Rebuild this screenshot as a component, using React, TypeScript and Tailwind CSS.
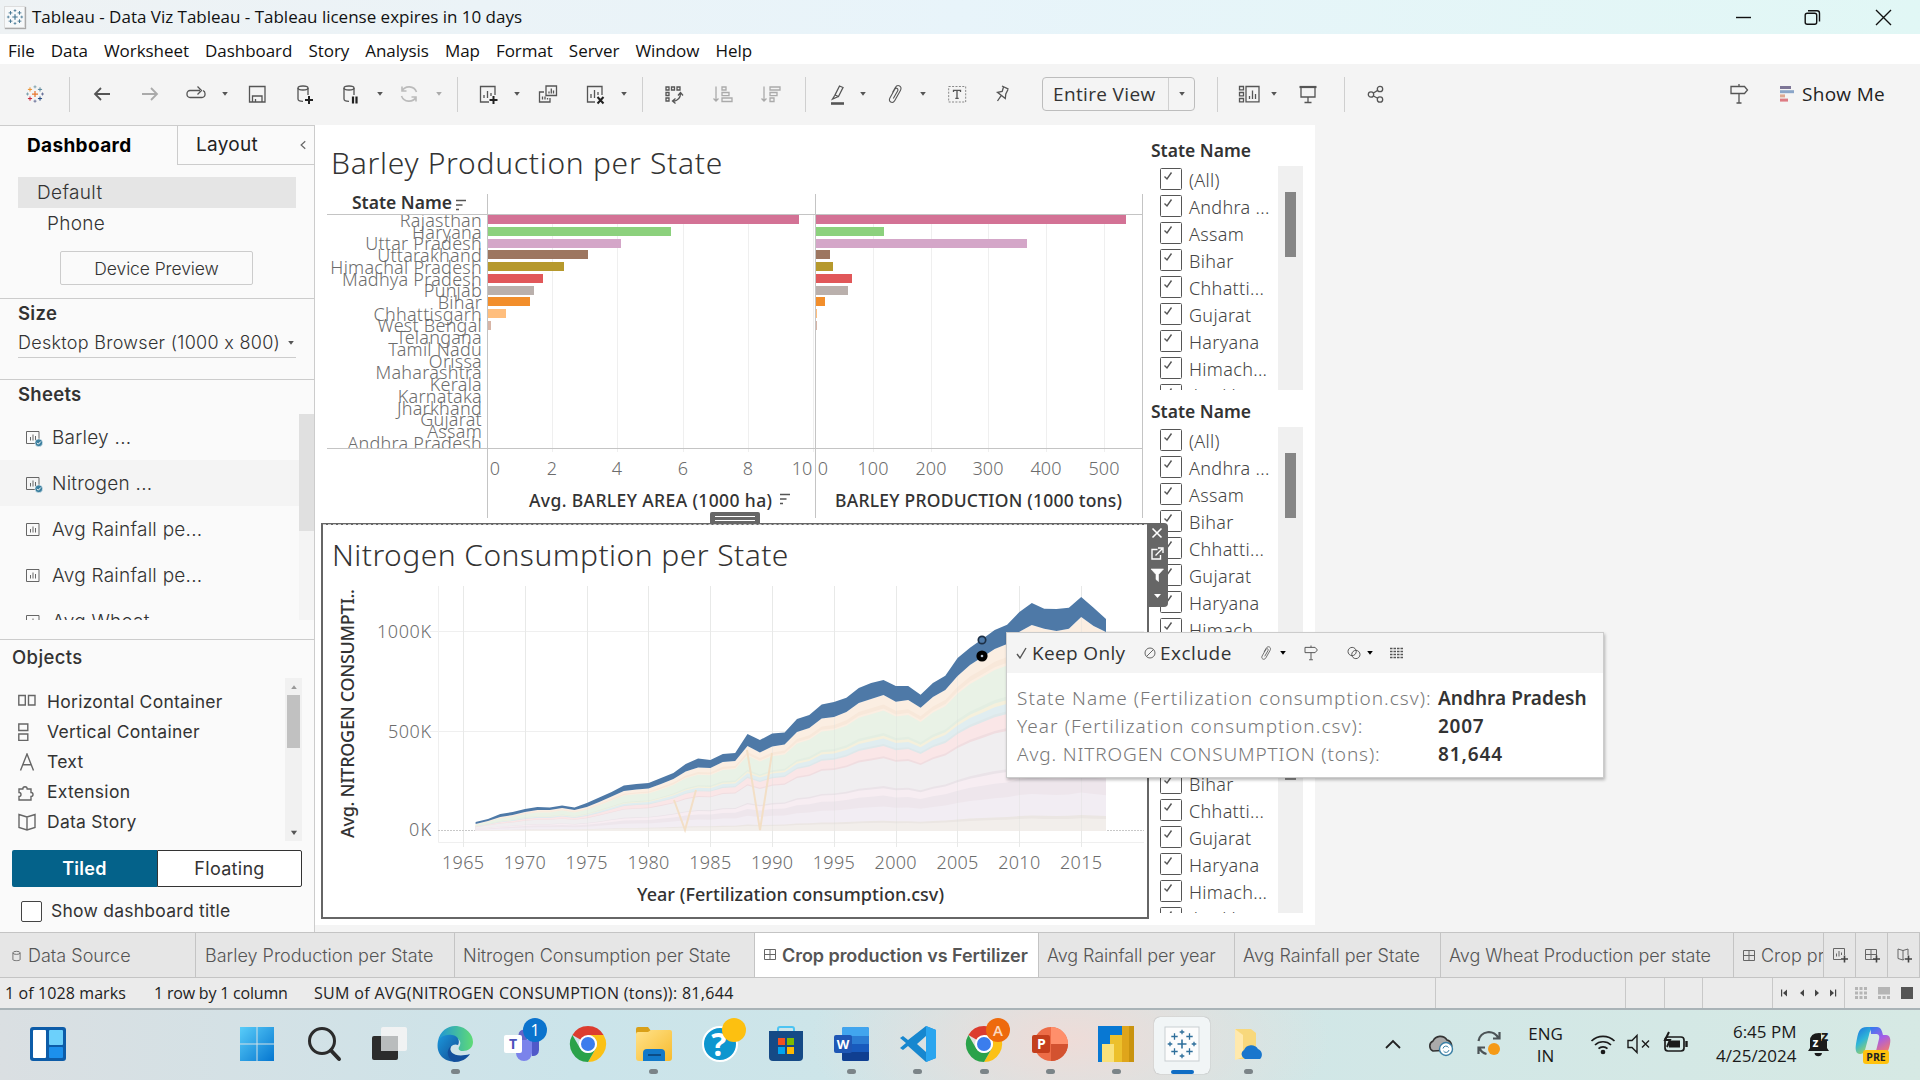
import React from "react";

type Kids = { children?: React.ReactNode };

/* ---------- icon helpers ---------- */

function Ico({ children, className = "" }: Kids & { className?: string }) {
  return (
    <svg viewBox="0 0 24 24" fill="none" stroke="currentColor" strokeWidth="1.3" className={"h-6 w-6 shrink-0 text-[#555] " + className}>
      {children}
    </svg>
  );
}

function Caret({ className = "" }: { className?: string }) {
  return (
    <svg viewBox="0 0 8 6" className={"h-1.5 w-2 shrink-0 fill-[#555] " + className}>
      <path d="M1.2 1h5.6L4 4.8z" />
    </svg>
  );
}

function Sep({ className = "" }: { className?: string }) {
  return <div className={"h-[35px] w-px shrink-0 bg-[#cfcfcf] " + className} />;
}

const plus = (x: number, y: number, r: number) => `M${x - r} ${y}h${2 * r}M${x} ${y - r}v${2 * r}`;

function TableauMark({ mono = false, className = "" }: { mono?: boolean; className?: string }) {
  const c = (v: string) => (mono ? "#3f7390" : v);
  return (
    <svg viewBox="0 0 24 24" fill="none" className={"shrink-0 " + className}>
      <path d={plus(12, 12, 3.6)} stroke={c("#e8762d")} strokeWidth="1.5" />
      <path d={plus(6, 6.5, 2.5)} stroke={c("#eb912c")} strokeWidth="1.2" />
      <path d={plus(18, 6.5, 2.5)} stroke={c("#59879b")} strokeWidth="1.2" />
      <path d={plus(6, 17.5, 2.5)} stroke={c("#c72035")} strokeWidth="1.2" />
      <path d={plus(18, 17.5, 2.5)} stroke={c("#1f457e")} strokeWidth="1.2" />
      <path d={plus(12, 3.4, 1.8)} stroke={c("#7199a6")} strokeWidth="1" />
      <path d={plus(12, 20.6, 1.8)} stroke={c("#5b6591")} strokeWidth="1" />
      <path d={plus(3, 12, 1.8)} stroke={c("#7199a6")} strokeWidth="1" />
      <path d={plus(21, 12, 1.8)} stroke={c("#5b6591")} strokeWidth="1" />
    </svg>
  );
}

function Clip({ className = "" }: { className?: string }) {
  return (
    <Ico className={className}>
      <path d="M9.500 10.500l2.700-4.800c2.400-4.200 7.600-1.400 5.200 2.900l-5.600 9.900c-2.200 3.800-7 1.200-4.900-2.600l4.900-8.600c1.300-2.200 4.100-.7 2.800 1.600l-4.300 7.500" strokeWidth="1.100" />
    </Ico>
  );
}

function Signpost({ className = "" }: { className?: string }) {
  return (
    <Ico className={className}>
      <path d="M12 2v2.500M4 4.500h13.500l3 3.500-3 3.500H4zM12 11.500v9M9.500 21h5" />
    </Ico>
  );
}

/* ---------- title bar and menu ---------- */

function TitleBar() {
  return (
    <header className="flex h-[34px] shrink-0 items-center bg-linear-to-r from-[#eef2f4] via-[#e8f4fa] via-50% to-[#e1f7f5] pl-1 font-['Open_Sans',sans-serif]">
      <div className="flex h-[22px] w-[21px] items-center justify-center border border-[#ddd] bg-[#f7f9fa] shadow-[1px_1px_1px_#aaa]">
        <TableauMark mono className="h-[18px] w-[18px]" />
      </div>
      <span className="ml-[7px] text-[17px] tracking-[-0.01px] text-[#111]">Tableau - Data Viz Tableau - Tableau license expires in 10 days</span>
      <svg viewBox="0 0 160 20" fill="none" stroke="#111" strokeWidth="1.4" className="mr-[28px] ml-auto h-5 w-40">
        <path d="M4 10.500h15" />
        <rect x="73.200" y="6.200" width="11.500" height="11" rx="2" />
        <path d="M76 3.700h9a2.500 2.500 0 0 1 2.500 2.500v8.300" />
        <path d="M144 3l15 15M159 3l-15 15" />
      </svg>
    </header>
  );
}

const menus = ["File", "Data", "Worksheet", "Dashboard", "Story", "Analysis", "Map", "Format", "Server", "Window", "Help"];

function MenuBar() {
  return (
    <nav className="flex h-[30px] shrink-0 items-center gap-4 bg-white pt-[3px] pl-2 font-['Open_Sans',sans-serif] text-[17px] tracking-[-0.04px] text-[#111]">
      {menus.map((m) => (
        <span key={m}>{m}</span>
      ))}
    </nav>
  );
}

/* ---------- toolbar ---------- */

function Toolbar() {
  return (
    <div className="flex h-[61px] shrink-0 items-center bg-[#f4f4f4] pb-px">
      <TableauMark className="ml-[25px] h-5 w-5" />
      <Sep className="ml-[24px]" />
      <Ico className="ml-[20px]"><path d="M20 12H5M11 6l-6 6 6 6" strokeWidth="1.8" /></Ico>
      <Ico className="ml-6 text-[#aaa]"><path d="M4 12h15M13 6l6 6-6 6" strokeWidth="1.8" /></Ico>
      <Ico className="ml-[22px]"><path d="M7 15.500H6a3 3 0 0 1-3-3v-1a3 3 0 0 1 3-3h10M13.500 4.500l4 4-4 4M17 15.500h1a3 3 0 0 0 3-3v-1a3 3 0 0 0-2-2.800M7 15.500h10" /></Ico>
      <Caret className="ml-[13px]" />
      <Ico className="ml-4"><path d="M4.500 4.500h15.500v15.500H4.500zM7.500 20v-6h9.500v6M10.500 20v-3" /></Ico>
      <Ico className="ml-6"><ellipse cx="10" cy="6" rx="5" ry="2" /><path d="M5 6v11c0 1.500 2 2.300 5 2.300M15 6v7" /><path d="M16 14v8M12 18h8" stroke="#222" strokeWidth="2" /></Ico>
      <Ico className="ml-[22px]"><ellipse cx="10" cy="6" rx="5" ry="2" /><path d="M5 6v11c0 1.500 2 2.300 5 2.300M15 6v7" /><path d="M14 14.500v7M17.500 14.500v7" stroke="#222" strokeWidth="2.200" /></Ico>
      <Caret className="ml-[13px]" />
      <Ico className="ml-[13px] text-[#bbb]"><path d="M19.500 10A8 8 0 0 0 5 9M4.500 14A8 8 0 0 0 19 15M5 4.500V9h4.500M19 19.500V15h-4.500" strokeWidth="1.600" /></Ico>
      <Caret className="ml-[14px] fill-[#aaa]" />
      <Sep className="ml-[14px]" />
      <Ico className="ml-[18px]"><path d="M13 20H4.500V4.500H19V13M8 16v-3M11.500 16V9M15 14v-3" /><path d="M17.500 14v8M13.500 18h8" stroke="#222" strokeWidth="2" /></Ico>
      <Caret className="ml-[13px]" />
      <Ico className="ml-[15px]"><path d="M10 4h10.500v9.500H10zM13 11.500V9.500M15.300 11.500V6.500M17.500 11.500V8.500M8 10H3.500v10H14v-4M6.500 17.500v-3M9 17.500v-3M11.500 17.500v-1.500" /></Ico>
      <Ico className="ml-[23px]"><path d="M12 20H4.500V4.500H19V13M8 16v-4M11.500 16V8M15 13v-3" /><path d="M14.500 15l6 6.500M20.500 15l-6 6.500" stroke="#222" strokeWidth="2" /></Ico>
      <Caret className="ml-[13px]" />
      <Sep className="ml-[14px]" />
      <Ico className="ml-[19px]"><path d="M4 5h3v3H4zM9.500 5h3v3h-3zM15 5h3v3h-3zM4 10.500h3v3H4zM4 16h3v3H4zM18.500 11.500c0 4-2 7-7.500 8M16 13.500l2.500-3 2.500 3M13.500 16.500l-3 2.500 3 2.500" /></Ico>
      <Ico className="ml-[25px] text-[#aaa]"><path d="M5 4.500V19M2.500 16.500L5 19l2.500-2.500M11 5h4v3h-4zM11 10.500h7v3.200h-7zM11 16h10v3.500H11z" /></Ico>
      <Ico className="ml-6 text-[#aaa]"><path d="M5 4.500V19M2.500 16.500L5 19l2.500-2.500M11 5h10v3H11zM11 10.500h7v3.200h-7zM11 16h4v3.500h-4z" /></Ico>
      <Sep className="ml-[22px]" />
      <Ico className="ml-[20px]"><path d="M13.500 4l3.500 1.500-4.500 9-3.500-1.500zM9 13l-2.500 4 6-2.500" /><path d="M5 21.500h13" strokeWidth="2.600" /></Ico>
      <Caret className="ml-[9px]" />
      <Clip className="ml-4" />
      <Caret className="ml-3" />
      <Ico className="ml-[18px]"><path d="M3.700 4.500h17v15.500h-17z" strokeDasharray="2 1.400" stroke="#888" strokeWidth="1" /><path d="M8.500 10V8.300h7V10M12 8.300v8M10.300 16.300h3.400" /></Ico>
      <Ico className="ml-[22px]"><path d="M11 4l6.500 3.200M12.500 5l-1.300 4.500-4.700.8 7.800 6.200.5-4.500 2.200-4.500M10.300 13.300L6.500 19" /></Ico>
      <div className="ml-[27px] flex h-[34px] w-[153px] shrink-0 items-center rounded-sm border border-[#bdbdbd] font-['Open_Sans',sans-serif] text-[19px] text-[#333]">
        <span className="flex-1 pl-2.5 tracking-[0.35px]">Entire View</span>
        <span className="flex h-full w-[26px] items-center justify-center border-l border-[#d0d0d0]"><Caret /></span>
      </div>
      <Sep className="ml-[22px]" />
      <Ico className="ml-[19px]"><path d="M2.500 4.500h4v3.300h-4zM2.500 10.500h4v3.300h-4zM2.500 16.500h4v3.300h-4zM9 4.500h13v15.300H9zM12.500 17v-3M15.500 17V8.500M18.500 17v-5" /></Ico>
      <Caret className="ml-[9px]" />
      <Ico className="ml-[18px]"><path d="M3.500 5h17" strokeWidth="2.200" /><path d="M5 5v10h14V5M12 15v5.500M8.500 20.500h7" /></Ico>
      <Sep className="ml-6" />
      <Ico className="ml-[19px]"><circle cx="7" cy="12.500" r="2.700" /><circle cx="16" cy="7" r="2.700" /><circle cx="16" cy="17.500" r="2.700" /><path d="M9.400 11l4.300-2.600M9.400 14l4.300 2.300" /></Ico>
      <Signpost className="ml-auto" />
      <svg viewBox="0 0 16 16" className="ml-[29px] h-4 w-4 shrink-0">
        <path fill="#7d7596" d="M0 0h11v3H0z" />
        <path fill="#8aa5c8" d="M0 4.200h14v3H0z" />
        <path fill="#dda891" d="M0 8.400h5v3H0z" />
        <path fill="#dd7b83" d="M0 12.600h8v3H0z" />
      </svg>
      <span className="mr-[35px] ml-[6px] font-['Open_Sans',sans-serif] text-[19px] tracking-[0.3px] text-[#222]">Show Me</span>
    </div>
  );
}

/* ---------- left panel ---------- */

function SheetIcon({ used }: { used?: boolean }) {
  return (
    <svg viewBox="0 0 18 18" fill="none" stroke="#666" className="mt-[2px] h-[18px] w-[18px] shrink-0">
      <path d="M.5 1.500h12.500V13.500H.5zM4.500 10.500V7M7 10.500V4.500M9.500 10.500V6" />
      {used && (
        <>
          <circle cx="12.800" cy="12.800" r="3.900" fill="#3b7f9f" stroke="#fff" strokeWidth=".6" />
          <path d="M11 12.800l1.400 1.400 2.400-2.700" stroke="#fff" />
        </>
      )}
    </svg>
  );
}

const sheets: [string, boolean, boolean][] = [
  ["Barley ...", true, false],
  ["Nitrogen ...", true, true],
  ["Avg Rainfall pe...", false, false],
  ["Avg Rainfall pe...", false, false],
  ["Avg Wheat ...", false, false],
];

const objects: [string, React.ReactNode][] = [
  ["Horizontal Container", <path key="p" d="M.8 2.500h6.500v9.500H.8zM10.500 2.500H17v9.500h-6.500z" />],
  ["Vertical Container", <path key="p" d="M.8 1h9v6.500h-9zM.8 11h9v6.500h-9z" />],
  ["Text", <path key="p" d="M2.500 17.500L9 1l6.500 16.500M4.800 11.700h8.400" />],
  ["Extension", <path key="p" d="M1 6h3.800a2 2 0 1 1 4.400 0H13v3.500a2 2 0 1 1 0 4V17H1v-3.500a2 2 0 1 0 0-4z" />],
  ["Data Story", <path key="p" d="M9 4L1 1.500v13L9 17l8-2.500v-13zM9 4v13" />],
];

function SidePanel() {
  return (
    <aside className="flex w-[315px] shrink-0 flex-col border-r border-[#ccc] bg-[#fafafa] font-['Inter',sans-serif] text-[18px] text-[#333]">
      <div className="flex h-[40px] shrink-0 border-t border-[#ccc]">
        <div className="w-[177px] pt-[6px] pl-[27px] text-[19px] leading-[27px] font-bold tracking-[0.35px] text-black">Dashboard</div>
        <div className="flex flex-1 items-center border-b border-l border-[#ccc] pl-[18px] text-[19px] tracking-[0.3px] text-[#222]">
          Layout
          <svg viewBox="0 0 8 12" fill="none" stroke="#666" strokeWidth="1.600" className="mr-[8px] ml-auto h-2.5 w-1.5"><path d="M7 1L1.500 6 7 11" /></svg>
        </div>
      </div>
      <div className="mx-[18px] mt-3 h-[31px] bg-[#e5e5e5] pl-[19px] text-[19px] leading-[32px] font-light tracking-[0.35px]">Default</div>
      <div className="h-[31px] pl-[47px] text-[19px] leading-[31px] font-light tracking-[0.3px]">Phone</div>
      <div className="mt-3 ml-[60px] h-[34px] w-[193px] rounded-xs border border-[#ccc] text-center text-[17.5px] leading-[33px] font-light tracking-[-0.1px]">Device Preview</div>
      <div className="mt-[13px] h-[81px] border-t border-[#ccc] px-[18px]">
        <div className="h-[29px] text-[18.5px] leading-[28px] font-semibold tracking-[0.3px]">Size</div>
        <div className="flex h-[30px] items-center justify-between border-b border-[#ccc] pr-[1px] text-[18px] font-light tracking-[0.29px]">
          Desktop Browser (1000 x 800) <Caret />
        </div>
      </div>
      <div className="h-[35px] border-t border-[#ccc] pl-[18px] text-[18.5px] leading-[28px] font-semibold tracking-[0.3px]">Sheets</div>
      <div className="flex h-[206px] overflow-hidden">
        <div className="flex-1">
          {sheets.map(([name, used, hot], i) => (
            <div key={i} className={"flex h-[46px] items-center gap-[8px] pt-[2px] pl-[26px] text-[19px] font-light tracking-[0.25px] " + (hot ? "bg-[#f4f4f4]" : "")}>
              <SheetIcon used={used} />
              {name}
            </div>
          ))}
        </div>
        <div className="w-[15px] bg-[#f4f4f4]"><div className="h-[117px] bg-[#e0e0e0]" /></div>
      </div>
      <div className="mt-[19px] h-[39px] border-t border-[#ccc] pl-[12px] text-[18.5px] leading-[34px] font-medium tracking-[0.4px]">Objects</div>
      <div className="flex h-[163px]">
        <div className="flex-1 pt-[9px]">
          {objects.map(([name, d]) => (
            <div key={name} className="flex h-[30px] items-center gap-[11px] pl-[18px] text-[17.5px] tracking-[0.27px]">
              <svg viewBox="0 0 18 18" fill="none" stroke="#666" strokeWidth="1.400" className="h-[18px] w-[18px]">{d}</svg>
              {name}
            </div>
          ))}
        </div>
        <div className="mr-[12px] flex w-[17px] flex-col items-center justify-between bg-[#f1f1f1]">
          <div className="flex flex-col items-center">
            <span className="flex h-[17px] items-center"><Caret className="rotate-180 fill-[#999]" /></span>
            <div className="h-[53px] w-[13px] bg-[#c1c1c1]" />
          </div>
          <span className="flex h-[17px] items-center"><Caret className="scale-110" /></span>
        </div>
      </div>
      <div className="mx-[12px] mt-[9px] flex h-[37px] text-center text-[18px] leading-[35px] tracking-[0.3px]">
        <div className="w-[145px] rounded-l-xs bg-[#04628a] pt-px font-semibold text-white">Tiled</div>
        <div className="flex-1 rounded-r-xs border border-[#333] bg-white">Floating</div>
      </div>
      <div className="mt-[14px] flex items-start pl-[21px]">
        <div className="h-[21px] w-[21px] rounded-xs border border-[#444] bg-white" />
        <span className="ml-[9px] text-[17.5px] leading-[19px] tracking-[0.25px]">Show dashboard title</span>
      </div>
    </aside>
  );
}

/* ---------- barley bar chart ---------- */

const barley: [string, string, number, number, number][] = [
  ["Rajasthan", "#d37295", 215, 799, 1126],
  ["Haryana", "#8cd17d", 227, 671, 884],
  ["Uttar Pradesh", "#d4a6c8", 239, 621, 1027],
  ["Uttarakhand", "#9d7660", 250, 588, 830],
  ["Himachal Pradesh", "#b6992d", 262, 564, 833],
  ["Madhya Pradesh", "#e15759", 274, 543, 852],
  ["Punjab", "#bab0ac", 286, 534, 848],
  ["Bihar", "#f28e2b", 297, 530, 825],
  ["Chhattisgarh", "#ffbe7d", 309, 506, 817],
  ["West Bengal", "#d7b5a6", 321, 491, 817],
];
const emptyStates = ["Telangana", "Tamil Nadu", "Orissa", "Maharashtra", "Kerala", "Karnataka", "Jharkhand", "Gujarat", "Assam", "Andhra Pradesh"];
const stateNames = [...barley.map((b) => b[0]), ...emptyStates];

function SortGlyph({ x, y }: { x: number; y: number }) {
  return <path d={`M${x} ${y}h10M${x} ${y + 4.5}h6.500M${x} ${y + 9}h3`} stroke="#555" strokeWidth="1.500" />;
}

function BarleyChart() {
  const axis: [string, number][] = [["2", 552], ["4", 617], ["6", 683], ["8", 748], ["100", 873], ["200", 931], ["300", 988], ["400", 1046], ["500", 1104]];
  return (
    <svg viewBox="315 190 833 333" className="block h-[333px] w-[833px] font-['Noto_Sans',sans-serif] text-[17.5px]">
      <defs>
        <clipPath id="rows"><rect x="315" y="215" width="833" height="233" /></clipPath>
      </defs>
      <path d="M552.500 215V452M617.500 215V452M683.500 215V452M748.500 215V452M813.500 215V452M873.500 215V452M931.500 215V452M988.500 215V452M1046.500 215V452M1104.500 215V452" stroke="#efefef" />
      {barley.map(([n, c, y, a, b]) => (
        <g key={n} fill={c}>
          <rect x="488" y={y} width={a - 488} height="9" />
          <rect x="816" y={y} width={b - 816} height="9" />
        </g>
      ))}
      <path d="M327 214.500h816M327 448.500h816M487.500 194V518M815.500 194V518M1142.500 194V518" stroke="#c4c4c4" />
      <g clipPath="url(#rows)" textAnchor="end" className="fill-[#6c6c6c] text-[18px] font-light tracking-[0.25px]">
        {stateNames.map((n, i) => (
          <text key={n} x="482" y={227 + i * 11.72}>{n}</text>
        ))}
      </g>
      <text x="352" y="208.500" textLength="100" className="fill-[#333] font-semibold">State Name</text>
      <SortGlyph x={456} y={200.5} />
      <g className="fill-[#6c6c6c] text-[18px] font-light" textAnchor="middle">
        {axis.map(([t, x]) => (
          <text key={t} x={x} y="475">{t}</text>
        ))}
        <text x="495" y="475">0</text>
        <text x="802" y="475">10</text>
        <text x="823" y="475">0</text>
      </g>
      <g className="fill-[#333] font-medium">
        <text x="529" y="507" textLength="243">Avg. BARLEY AREA (1000 ha)</text>
        <text x="835" y="507" textLength="287">BARLEY PRODUCTION (1000 tons)</text>
      </g>
      <SortGlyph x={780} y={494.5} />
    </svg>
  );
}

/* ---------- nitrogen area chart ---------- */

const top = [822, 819, 814, 812, 809, 807, 807.5, 805.5, 807.5, 803, 797.5, 792, 785.5, 784, 783, 778, 773, 764, 758.5, 760, 754, 753, 734, 740, 733.5, 732.5, 719, 715, 704.5, 702, 697.7, 688, 683, 680, 686, 686, 694.7, 683, 675.7, 658, 647.7, 639, 630, 624.7, 612, 603, 608.7, 609, 607.7, 597, 607.7, 619];
const low = [824, 821, 817, 815, 812, 810, 810, 808, 810, 807, 802, 796.5, 791, 789.5, 788.5, 784, 779, 771.5, 767.5, 768, 762, 761, 746, 752.5, 746.5, 744.5, 732, 728, 718.5, 717, 712, 703, 699, 695, 701.7, 700, 707.7, 697, 690, 676, 665, 657, 649, 644, 631.7, 625, 628.7, 631, 628.7, 617, 626, 632];
const yearX = (i: number) => 475.6 + i * 12.36;
const points = (ys: number[]) => ys.map((y, i) => `${yearX(i).toFixed(1)} ${y.toFixed(1)}`);
const under = (f: number) => low.map((y) => 831 - (831 - y) * f);

const bands: [number, string][] = [
  [1, "#fbeee2"], [0.93, "#f8e8da"], [0.9, "#fbeee2"], [0.885, "#e9f2e6"], [0.72, "#e3eee2"], [0.7, "#f5f0dc"], [0.68, "#e0edf0"], [0.64, "#dde8ea"], [0.625, "#fae6e7"],
  [0.55, "#f0dde0"], [0.535, "#f0eef0"], [0.33, "#eae3e8"], [0.315, "#f7edf2"], [0.26, "#eee6ec"], [0.18, "#f2edf3"], [0.075, "#ebe6e3"], [0.06, "#f2eeeb"],
];

function NitrogenChart() {
  const years = [1965, 1970, 1975, 1980, 1985, 1990, 1995, 2000, 2005, 2010, 2015];
  const areaEnd = yearX(51);
  const grid = years.map((_, i) => `M${463.5 + Math.round(i * 61.8)} 586V847`).join("");
  return (
    <svg viewBox="323 575 824 342" className="block h-[342px] w-[824px] font-['Noto_Sans',sans-serif] text-[18px]">
      <path d="M430 631.500H1144M430 731.500H1144M438.500 586V842.500H1144" stroke="#efefef" fill="none" />
      <path d={grid} stroke="#efefef" />
      <path d="M438 830.500H1144" stroke="#c8c8c8" strokeDasharray="2 1" />
      {bands.map(([f, c]) => (
        <path key={f} d={`M${points(under(f)).join("L")}L${areaEnd} 831L475.6 831Z`} fill={c} />
      ))}
      <path d={grid} stroke="#d8dcd8" strokeOpacity=".3" />
      <path d="M674 800l11 30 11-40M747 750l13 80 12-77" stroke="#f3dfc6" strokeWidth="2" fill="none" />
      <path d={`M${points(top).join("L")}L${points(low).reverse().join("L")}Z`} fill="#4e79a7" />
      <circle cx="982" cy="640" r="3.700" fill="#4e79a7" stroke="#1c2f45" strokeWidth="1.700" />
      <circle cx="982" cy="656" r="5.600" fill="#000" />
      <circle cx="982" cy="656" r="1.300" fill="#b9c7d8" />
      <g className="fill-[#6c6c6c] font-light">
        <text x="377" y="638" textLength="54">1000K</text>
        <text x="388" y="738" textLength="43">500K</text>
        <text x="409" y="836" textLength="22">0K</text>
      </g>
      <g className="fill-[#6c6c6c] font-light" textAnchor="middle">
        {years.map((y, i) => (
          <text key={y} x={463 + i * 61.8} y="869" textLength="42">{y}</text>
        ))}
      </g>
      <text x="637" y="901" textLength="307" className="fill-[#333] font-medium">Year (Fertilization consumption.csv)</text>
      <text transform="translate(353.500 838) rotate(-90)" textLength="249" className="fill-[#333] font-medium">Avg. NITROGEN CONSUMPTI..</text>
    </svg>
  );
}

function ZoneControls() {
  return (
    <div className="absolute -top-[2px] left-[824px] z-10 flex h-[84px] w-[21px] flex-col items-center rounded-r-sm bg-[#666]">
      <svg viewBox="0 0 21 84" fill="none" stroke="#fff" strokeWidth="1.600" className="h-[84px] w-[21px]">
        <path d="M5.500 5.500l9 9M14.500 5.500l-9 9" />
        <path d="M10.500 26.500H5V36h8.500v-4M8.500 32.500l6.500-6.500M11 25h5v5" strokeWidth="1.400" />
        <path d="M4 46h12.500l-5 5.500v7l-2.500-2v-5z" fill="#fff" strokeWidth=".6" />
        <path d="M7 71h7l-3.500 4z" fill="#fff" stroke="none" />
      </svg>
    </div>
  );
}

/* ---------- filters ---------- */

const filterItems = ["(All)", "Andhra ...", "Assam", "Bihar", "Chhatti...", "Gujarat", "Haryana", "Himach...", "Jharkha..."];

function FilterCard() {
  return (
    <section className="h-[261px] font-['Noto_Sans',sans-serif] text-[#444]">
      <h3 className="h-[41px] pt-[13px] pl-[3px] text-[17.5px] leading-6 font-semibold text-[#333]">State Name</h3>
      <div className="flex h-[224px] overflow-hidden">
        <div className="w-[130px] pt-[2px]">
          {filterItems.map((t) => (
            <div key={t} className="flex h-[27px] items-start pl-[12px]">
              <svg viewBox="0 0 22 22" fill="none" stroke="#555" className="h-[22px] w-[22px] shrink-0">
                <rect x=".5" y=".5" width="21" height="21" rx="1" fill="#fff" />
                <path d="M4.500 8.500L7 11l4.500-6.500" stroke="#555" strokeWidth="1.400" />
              </svg>
              <span className="ml-[7px] text-[18px] leading-[25px] font-light tracking-[0.32px] whitespace-nowrap">{t}</span>
            </div>
          ))}
        </div>
        <div className="w-[25px] bg-[#f0f0f0] pt-[26px] pl-[7px]"><div className="h-[65px] w-[11px] bg-[#868686]" /></div>
      </div>
    </section>
  );
}

/* ---------- tooltip ---------- */

const facts = [
  { label: "State Name (Fertilization consumption.csv):", value: "Andhra Pradesh", labelCls: "tracking-[1.03px]", valueCls: "tracking-[0.05px]" },
  { label: "Year (Fertilization consumption.csv):", value: "2007", labelCls: "tracking-[1.06px]", valueCls: "tracking-[0.7px]" },
  { label: "Avg. NITROGEN CONSUMPTION (tons):", value: "81,644", labelCls: "tracking-[0.88px]", valueCls: "tracking-[0.9px]" },
];

function MarkTooltip() {
  return (
    <div className="absolute top-[507px] left-[691px] z-20 h-[146px] w-[598px] border border-[#ccc] bg-white shadow-[1px_2px_3px_#0004]">
      <div className="flex h-[40px] items-center bg-[#f4f4f4] font-['Open_Sans',sans-serif] text-[19px] tracking-[0.35px] text-[#333]">
        <svg viewBox="0 0 12 12" fill="none" stroke="#555" strokeWidth="1.400" className="ml-[9px] h-3 w-3"><path d="M1 7l3 4 6-10" /></svg>
        <span className="ml-[4px] w-[98px]">Keep Only</span>
        <svg viewBox="0 0 12 12" fill="none" stroke="#666" className="ml-[14px] h-3 w-3"><circle cx="6" cy="6" r="5" /><path d="M9.500 2.500l-7 7" /></svg>
        <span className="ml-[4px] w-[75px] tracking-[0.5px]">Exclude</span>
        <Clip className="ml-[22px] h-[18px] w-[18px]" />
        <Caret className="ml-[4px] fill-black" />
        <Signpost className="ml-[15px] h-[18px] w-[18px]" />
        <Ico className="ml-[25px] h-[18px] w-[18px]"><circle cx="9.500" cy="10" r="5.500" /><circle cx="14.500" cy="14" r="5.500" /></Ico>
        <Caret className="ml-[3px] fill-black" />
        <svg viewBox="0 0 14 12" fill="none" stroke="#555" strokeWidth="1.500" strokeDasharray="2.500 1" className="ml-[16px] h-3 w-3.5"><path d="M0 1.500h14M0 4.500h14M0 7.500h14M0 10.500h14" /></svg>
      </div>
      <dl className="pt-[11px] pl-[10px] font-['Noto_Sans',sans-serif] text-[19px] leading-[28px]">
        {facts.map((f) => (
          <div key={f.label} className="flex whitespace-nowrap">
            <dt className={"w-[421px] font-light text-[#777] " + f.labelCls}>{f.label}</dt>
            <dd className={"font-semibold text-[#333] " + f.valueCls}>{f.value}</dd>
          </div>
        ))}
      </dl>
    </div>
  );
}

function DashboardCanvas() {
  return (
    <main className="relative flex flex-1 bg-[#f4f4f4]">
      <div className="flex h-[800px] w-[1000px] bg-white">
        <div className="w-[833px]">
          <h2 className="h-[65px] pt-[18px] pl-[16px] font-['Noto_Sans',sans-serif] text-[30px] leading-[40px] font-light tracking-[0.72px] text-[#333]">Barley Production per State</h2>
          <BarleyChart />
          <section className="relative ml-[6px] h-[396px] w-[828px] border-2 border-[#666]">
            <div className="absolute -top-px right-0 left-0 border-t border-dashed border-[#ccc]" />
            <div className="absolute -top-[13px] left-[387px] flex h-3 w-[50px] flex-col justify-center gap-[3px] rounded-t-xs bg-[#666] px-[5px]">
              <i className="h-px bg-white" />
              <i className="h-px bg-white" />
            </div>
            <ZoneControls />
            <h2 className="h-[50px] pt-[10px] pl-[9px] font-['Noto_Sans',sans-serif] text-[30px] leading-[40px] font-light tracking-[0.45px] text-[#333]">Nitrogen Consumption per State</h2>
            <NitrogenChart />
          </section>
        </div>
        <div className="flex w-[167px] flex-col">
          <FilterCard />
          <FilterCard />
          <div className="h-px" />
          <FilterCard />
        </div>
      </div>
      <MarkTooltip />
    </main>
  );
}

/* ---------- sheet tabs and status ---------- */

function GridIcon({ add }: { add?: boolean }) {
  return (
    <svg viewBox="0 0 16 16" fill="none" stroke="#666" className="h-4 w-4 shrink-0">
      <path d="M1.500 2.500h11v10h-11zM1.500 7.500h11M7 2.500v10" />
      {add && <path d="M12.500 8.500v7M9 12h7" stroke="#444" strokeWidth="1.600" />}
    </svg>
  );
}

const tabCls = "flex items-center border-r border-[#c4c4c4] text-[#555] whitespace-nowrap overflow-hidden ";

function SheetTabs() {
  return (
    <div className="flex h-[46px] shrink-0 border-y border-[#c4c4c4] bg-[#e6e6e6] font-['Inter',sans-serif] text-[18px] font-light">
      <div className={tabCls + "w-[196px] pt-px pl-[12px]"}>
        <svg viewBox="0 0 10 12" fill="none" stroke="#666" className="mr-[7px] h-3 w-[9px]"><ellipse cx="5" cy="2.500" rx="4" ry="1.700" /><path d="M1 2.500v7.500c0 1.500 8 1.500 8 0V2.500" /></svg>
        Data Source
      </div>
      <div className={tabCls + "w-[259px] pt-px pl-[9px]"}>Barley Production per State</div>
      <div className={tabCls + "w-[300px] pt-px pl-[8px] tracking-[-0.04px]"}>Nitrogen Consumption per State</div>
      <div className={tabCls + "w-[284px] gap-[3px] bg-white pl-[8px] font-semibold tracking-[-0.05px]"}><GridIcon />Crop production vs Fertilizer</div>
      <div className={tabCls + "w-[196px] pt-px pl-[8px] tracking-[-0.12px]"}>Avg Rainfall per year</div>
      <div className={tabCls + "w-[206px] pt-px pl-[8px]"}>Avg Rainfall per State</div>
      <div className={tabCls + "w-[293px] pt-px pl-[8px] tracking-[-0.07px]"}>Avg Wheat Production per state</div>
      <div className={tabCls + "w-[90px] gap-[3px] pt-px pl-[8px]"}><GridIcon />Crop production</div>
      <div className={tabCls + "w-[32px] justify-center"}>
        <svg viewBox="0 0 16 16" fill="none" stroke="#666" className="h-4 w-4"><path d="M9 12.500H1.500v-11h11V8M4.500 9.500v-3M7 9.500V4M9.500 8V5.500" /><path d="M12.500 8.500v7M9 12h7" stroke="#444" strokeWidth="1.600" /></svg>
      </div>
      <div className={tabCls + "w-[32px] justify-center"}><GridIcon add /></div>
      <div className={tabCls + "w-[32px] justify-center"}>
        <svg viewBox="0 0 16 16" fill="none" stroke="#666" className="h-4 w-4"><path d="M8.500 12L7 13l-5-1.500V2l5 1.500L12 2v6M7 3.500V13" /><path d="M12.500 8.500v7M9 12h7" stroke="#444" strokeWidth="1.600" /></svg>
      </div>
    </div>
  );
}

function StatusBar() {
  return (
    <div className="flex h-[30px] shrink-0 items-center bg-[#ebebeb] pl-[5px] font-['Open_Sans',sans-serif] text-[16px] tracking-[-0.2px] text-[#222]">
      <span className="w-[149px] tracking-[0.1px]">1 of 1028 marks</span>
      <span className="w-[160px]">1 row by 1 column</span>
      <span className="tracking-[0.32px]">SUM of AVG(NITROGEN CONSUMPTION (tons)): 81,644</span>
      <div className="ml-auto flex h-full">
        <i className="w-[190px] border-l border-[#c8c8c8]" />
        <i className="w-[39px] border-l border-[#c8c8c8]" />
        <i className="w-[38px] border-l border-[#c8c8c8]" />
        <i className="w-[70px] border-l border-[#c8c8c8]" />
        <div className="flex w-[72px] items-center border-l border-[#c8c8c8]">
          <svg viewBox="0 0 70 12" fill="#444" className="h-3 w-[70px]">
            <path d="M8 2.500h1.200v7H8zM14 2.500v7L10 6zM31 2.500v7L27 6zM42 2.500v7L46 6zM57 2.500v7L61 6zM62 2.500h1.200v7H62z" />
          </svg>
        </div>
        <div className="flex w-[76px] items-center border-l border-[#c8c8c8]">
          <svg viewBox="0 0 72 12" fill="#b5b5b5" className="h-3 w-[72px]">
            <path d="M10 0h3v3h-3zM14.500 0h3v3h-3zM19 0h3v3h-3zM10 4.500h3v3h-3zM14.500 4.500h3v3h-3zM19 4.500h3v3h-3zM10 9h3v3h-3zM14.500 9h3v3h-3zM19 9h3v3h-3zM33 0h12v7.500H33zM33 9h3v3h-3zM37.500 9h3v3h-3zM42 9h3v3h-3z" />
            <path d="M56 0h12v12H56z" fill="#555" />
          </svg>
        </div>
      </div>
    </div>
  );
}

/* ---------- taskbar ---------- */

function App36({ children, dot, active }: Kids & { dot?: boolean; active?: boolean }) {
  return (
    <div className="flex h-full w-[66.1px] shrink-0 justify-center">
      <div className={"relative mt-[7px] flex h-[57px] w-[56px] justify-center rounded-md " + (active ? "bg-[#f1f5f6] shadow-[0_0_1px_#888]" : "")}>
        <svg viewBox="0 0 36 36" className="mt-[9px] h-9 w-9 overflow-visible">{children}</svg>
        {dot && <i className="absolute bottom-0 h-[5px] w-[9px] rounded-full bg-[#7b8488]" />}
        {active && <i className="absolute bottom-0 h-[4px] w-[23px] rounded-full bg-[#0f6cc4]" />}
      </div>
    </div>
  );
}

function Chrome() {
  return (
    <>
      <path d="M18 18L2.400 9A18 18 0 0 1 33.600 9H18z" fill="#dc3c2f" />
      <path d="M18 9h15.600A18 18 0 0 1 18 36l7.800-13.500A9 9 0 0 0 18 9z" fill="#fbc116" />
      <path d="M2.400 9A18 18 0 0 0 18 36l7.800-13.500A9 9 0 0 1 10.200 22.500z" fill="#2aa24a" />
      <circle cx="18" cy="18" r="9" fill="#fff" />
      <circle cx="18" cy="18" r="7" fill="#3b7ded" />
    </>
  );
}

function Taskbar() {
  return (
    <footer className="flex h-[72px] shrink-0 items-start border-t-2 border-[#a9b3b7] bg-linear-to-r from-[#dadfe2] via-[#cbe4ea] via-30% to-[#d6e9e4] font-['Open_Sans',sans-serif]">
      <div className="flex h-full w-full bg-[radial-gradient(ellipse_260px_120px_at_1070px_30px,#eedcd8,transparent)]">
        <svg viewBox="0 0 36 36" className="mt-[16px] ml-[30px] h-9 w-9">
          <rect y="1" width="36" height="34" rx="3" fill="#0d5ca8" />
          <rect x="3" y="4" width="13" height="28" rx="1" fill="#fff" />
          <rect x="19" y="4" width="14" height="15" rx="1" fill="#6cd0fb" />
          <rect x="19" y="21" width="14" height="11" rx="1" fill="#1c90ec" />
        </svg>
        <div className="ml-[158px] flex">
          <App36>
            <defs>
              <linearGradient id="win" x2="1" y2="1"><stop stopColor="#59cdf9" /><stop offset="1" stopColor="#0576d0" /></linearGradient>
              <linearGradient id="edge" x2="1" y2="0"><stop stopColor="#1f95d6" /><stop offset="1" stopColor="#5fdb76" /></linearGradient>
              <linearGradient id="edge2" x2="1" y2="1"><stop stopColor="#1c98dc" /><stop offset="1" stopColor="#114a92" /></linearGradient>
              <linearGradient id="fold" x2="1" y2="1"><stop stopColor="#ffe28a" /><stop offset="1" stopColor="#f7bb2e" /></linearGradient>
              <linearGradient id="copA" x2=".6" y2="1"><stop stopColor="#1b6fe0" /><stop offset=".5" stopColor="#2fb6d8" /><stop offset="1" stopColor="#b6d64a" /></linearGradient>
              <linearGradient id="copB" x2=".4" y2="1"><stop stopColor="#2a7df0" /><stop offset=".5" stopColor="#a45ce8" /><stop offset="1" stopColor="#f4796b" /></linearGradient>
            </defs>
            <path d="M1 1h16.500v16.500H1zM18.500 1H35v16.500H18.500zM1 18.500h16.500V35H1zM18.500 18.500H35V35H18.500z" fill="url(#win)" />
          </App36>
          <App36><g fill="none" stroke="#2b2b2b"><circle cx="17" cy="15" r="12.500" strokeWidth="3" /><path d="M26 24.500l8 8.500" strokeWidth="4" strokeLinecap="round" /></g></App36>
          <App36><rect x="1" y="10" width="26" height="24" rx="2" fill="#2c2c2c" /><rect x="10" y="1" width="26" height="24" rx="2" fill="#f4f4f4" fillOpacity=".9" /><path d="M10 10h17v15H10z" fill="#b9bcbd" /></App36>
          <App36 dot>
            <path d="M1 15C3 4 12-1 20 0c9 1 16 8 16 16 0 6-5 9-10 9-4 0-5-2-4-4 3-4 1-9-5-9-7 0-14 2-16 3z" fill="url(#edge)" />
            <path d="M1 15c3-5 8-7 14-6 7 1 8 7 6 10-4-2-9 1-8 7 1 4 5 8 10 9C10 38-2 30 1 15z" fill="url(#edge2)" />
            <path d="M14 20c-3 7 5 12 19 8-3 5-9 8-16 8-6-3-9-11-3-16z" fill="#124f9c" />
          </App36>
          <App36>
            <circle cx="21" cy="9" r="5.500" fill="#6264c7" />
            <path d="M13 14h16v13a8 8 0 0 1-16 0z" fill="#7b83eb" />
            <path d="M29 14h7v10a6 6 0 0 1-7 6z" fill="#5059c9" />
            <rect x="1" y="9" width="18" height="18" rx="2" fill="#fff" />
            <text x="10" y="23" textAnchor="middle" fontSize="14" fontWeight="700" fill="#4b53bc">T</text>
            <circle cx="32" cy="4" r="12" fill="#0b73cd" />
            <text x="32" y="10" textAnchor="middle" fontSize="16" fill="#fff">1</text>
          </App36>
          <App36><Chrome /></App36>
          <App36 dot>
            <path d="M0 3q0-2 2-2h10l3 4v5H0z" fill="#d9a018" />
            <path d="M0 8q0-2 2-2h10l3-2h19q2 0 2 2v26q0 3-3 3H3q-3 0-3-3z" fill="url(#fold)" />
            <path d="M7 35v-8q0-4 4-4h14q4 0 4 4v8z" fill="#1279c9" />
            <path d="M12 29h13" stroke="#0b4c86" strokeWidth="2" />
          </App36>
          <App36>
            <circle cx="18" cy="18" r="17" fill="#0d96cf" stroke="#fff" strokeWidth="2" />
            <text x="17" y="30" textAnchor="middle" fontSize="32" fontWeight="700" fill="#fff">?</text>
            <circle cx="32" cy="4" r="12" fill="#fdc010" />
          </App36>
          <App36>
            <path d="M10 6V3q0-2 2-2h12q2 0 2 2v3" fill="none" stroke="#4cc4f2" strokeWidth="2" />
            <path d="M1 5h34v26q0 4-4 4H5q-4 0-4-4z" fill="#154a86" />
            <path d="M10 12h7v7h-7z" fill="#f25022" /><path d="M19 12h7v7h-7z" fill="#7fba00" /><path d="M10 21h7v7h-7z" fill="#00a4ef" /><path d="M19 21h7v7h-7z" fill="#ffb900" />
          </App36>
          <App36 dot>
            <rect x="8" y="1" width="27" height="34" rx="2" fill="#2b7cd3" /><path d="M8 3q0-2 2-2h23q2 0 2 2v7H8z" fill="#41a5ee" /><path d="M8 26h27v7q0 2-2 2H10q-2 0-2-2z" fill="#103f91" /><path d="M8 18h27v8H8z" fill="#185abd" />
            <rect x="0" y="9" width="18" height="18" rx="2" fill="#1f57b5" /><text x="9" y="23" textAnchor="middle" fontSize="13" fontWeight="700" fill="#fff">W</text>
          </App36>
          <App36 dot>
            <path d="M26 0l10 4v28l-10 4L8 20l-5 4-3-2 6-5-6-5 3-2 5 4zM26 10l-9 8 9 8z" fill="#1787cf" fillRule="evenodd" /><path d="M26 0l10 4v28l-10 4z" fill="#2aa5ef" />
          </App36>
          <App36 dot><Chrome /><circle cx="32" cy="4" r="12" fill="#ee6a0c" /><text x="32" y="9.500" textAnchor="middle" fontSize="15" fontWeight="600" fill="#fbd9bf">A</text></App36>
          <App36 dot>
            <circle cx="19" cy="18" r="17" fill="#ed6c47" /><path d="M19 1a17 17 0 0 1 17 17H19z" fill="#ff8f6b" /><path d="M36 18a17 17 0 0 1-17 17V18z" fill="#d35230" />
            <rect x="0" y="9" width="18" height="18" rx="2" fill="#c43e1c" /><text x="9.500" y="23" textAnchor="middle" fontSize="14" fontWeight="700" fill="#fff">P</text>
          </App36>
          <App36 dot>
            <path d="M0 0h36v36H0z" fill="#0878d3" /><path d="M24 0h12v36H24z" fill="#c9930f" /><path d="M12 9h12v27H12z" fill="#ecc02c" /><path d="M4 18h12v18H4z" fill="#f9e17b" /><path d="M24 0h7v36h-7z" fill="#dfa51b" />
          </App36>
          <App36 active>
            <rect x="1" y="1" width="34" height="34" fill="#fcfcfc" stroke="#c9cfd2" />
            <g stroke="#2f6f9b" strokeWidth="1.300"><path d={plus(18, 18, 4.5)} strokeWidth="1.600" /><path d={plus(10.5, 10.5, 3.2) + plus(25.5, 10.5, 3.2) + plus(10.5, 25.5, 3.2) + plus(25.5, 25.5, 3.2) + plus(18, 6, 2.3) + plus(18, 30, 2.3) + plus(6, 18, 2.3) + plus(30, 18, 2.3)} /></g>
          </App36>
          <App36 dot>
            <path d="M5 4q0-1 1-1h15l5 4v26H8q-3-1-3-4z" fill="#f8d87c" /><path d="M5 3l8 6v22l-8 3z" fill="#ffe9ad" />
            <path d="M15 33a5 5 0 0 1-1-9 8 8 0 0 1 14-1 6 6 0 0 1 2 10z" fill="#1976cd" />
          </App36>
        </div>
        <svg viewBox="1375 0 135 70" fill="none" className="ml-[93px] h-[70px] w-[135px] shrink-0">
          <path d="M1386 38l7-7 7 7" stroke="#222" strokeWidth="1.800" />
          <path d="M1433 41a5.500 5.500 0 0 1 0-10 8 8 0 0 1 14-1 6 6 0 0 1 3 10z" fill="#aaa" stroke="#333" strokeWidth="1.600" />
          <circle cx="1446" cy="39" r="6.500" fill="#fff" stroke="#3a7fa5" strokeWidth="1.400" /><path d="M1443 38.500a3 3 0 0 1 5.500-1M1449 40a3 3 0 0 1-5.500 1" stroke="#3a7fa5" />
          <path d="M1478.500 31a10.500 10.500 0 0 1 20-2.500M1499.500 22v6.500h-6.500M1486.500 44a10 10 0 0 1-7-6M1478.500 44v-6.500h6.500" stroke="#4c5356" strokeWidth="2.200" />
          <circle cx="1494" cy="39" r="6" fill="#f59a16" />
        </svg>
        <div className="mt-[13px] w-[72px] text-center text-[17px] leading-[22px] text-[#1a1a1a]">ENG<br />IN</div>
        <svg viewBox="1584 0 110 70" fill="none" stroke="#1b1b1b" strokeWidth="1.700" className="ml-[3px] h-[70px] w-[110px] shrink-0">
          <path d="M1590.500 31a16.500 16.500 0 0 1 23 0M1594 35a11.500 11.500 0 0 1 16 0M1597.500 38.700a6.500 6.500 0 0 1 9 0" /><circle cx="1602" cy="42" r="1.500" fill="#1b1b1b" />
          <path d="M1627 30.500h4l5-5v17l-5-5h-4zM1641 30.500l7 7M1648 30.500l-7 7" strokeWidth="1.400" />
          <rect x="1664" y="27" width="19" height="14" rx="3" /><path d="M1668 30.500h11v7h-11z" fill="#1b1b1b" stroke="none" /><path d="M1685.500 31v6" strokeWidth="2.400" /><path d="M1668 22l-4 8h5l-3 7" stroke="#1b1b1b" strokeWidth="2" />
        </svg>
        <div className="mt-[10px] w-[102px] text-right text-[17px] leading-[24px] text-[#1a1a1a]">6:45 PM<br />4/25/2024</div>
        <svg viewBox="1797 0 110 70" className="h-[70px] w-[110px] shrink-0">
          <path d="M1810 38v-7q0-8 9-8 8 0 8 8v7l2 3h-21zM1814.500 43h7.500a3.800 3.800 0 0 1-7.500 0z" fill="#1b1b1b" />
          <path d="M1821 20h9v11h-9z" fill="#d0e8e8" />
          <text x="1812.500" y="37" fontSize="12" fontWeight="700" fill="#fff">z</text>
          <text x="1821" y="31" fontSize="15" fontWeight="700" fill="#1b1b1b">z</text>
          <path d="M1856 34c2-12 3-17 11-17h9c-5 0-6 4-7 8l-4 15c-1 3-3 4-5 4-4 0-5-4-4-10z" fill="url(#copA)" />
          <path d="M1870 17h7c4 0 5 4 6 8h3c4 0 5 4 4 9-2 9-4 13-10 13h-10c4 0 5-3 6-6l3-12c1-4-1-5-3-5h-5c0-4-1-5-1-7z" fill="url(#copB)" />
          <rect x="1863" y="40" width="26" height="14" rx="3" fill="#ffc20e" />
          <text x="1876" y="51" textAnchor="middle" fontSize="10.500" fontWeight="700" fill="#222">PRE</text>
        </svg>
      </div>
    </footer>
  );
}

export default function App() {
  return (
    <div className="flex h-[1080px] w-[1920px] flex-col overflow-hidden bg-[#f4f4f4]">
      <TitleBar />
      <MenuBar />
      <Toolbar />
      <div className="flex h-[807px] shrink-0">
        <SidePanel />
        <DashboardCanvas />
      </div>
      <SheetTabs />
      <StatusBar />
      <Taskbar />
    </div>
  );
}
